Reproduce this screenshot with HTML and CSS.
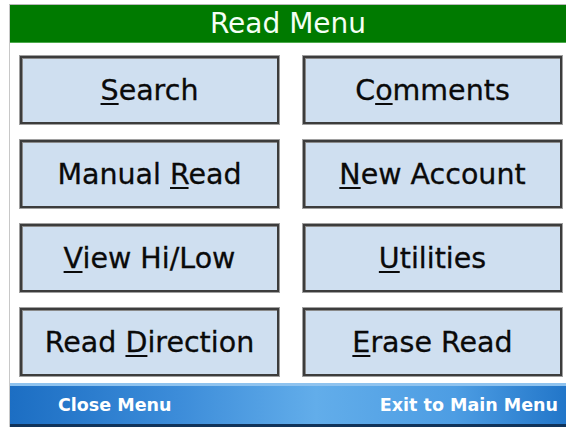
FILE: index.html
```html
<!DOCTYPE html>
<html>
<head>
  <title>Read Menu</title>
  <link rel="stylesheet" href="styles.css">
</head>
<body>
  <div class="screen">
    <div class="title-bar">Read Menu</div>
    <div class="menu-grid">
      <button class="menu-btn"><u>S</u>earch</button>
      <button class="menu-btn">C<u>o</u>mments</button>
      <button class="menu-btn">Manual <u>R</u>ead</button>
      <button class="menu-btn"><u>N</u>ew Account</button>
      <button class="menu-btn"><u>V</u>iew Hi/Low</button>
      <button class="menu-btn"><u>U</u>tilities</button>
      <button class="menu-btn">Read <u>D</u>irection</button>
      <button class="menu-btn"><u>E</u>rase Read</button>
    </div>
    <div class="soft-keys">
      <span class="soft-key">Close Menu</span>
      <span class="soft-key">Exit to Main Menu</span>
    </div>
  </div>
</body>
</html>
```

FILE: styles.css
```css
html, body {
  margin: 0;
  padding: 0;
  background-color: #fff;
}
body {
  font-family: "DejaVu Sans", Tahoma, sans-serif;
  width: 566px;
  height: 427px;
  overflow: hidden;
}
.screen {
  margin: 4px 0 0 9px;
  border-top: 1px solid #b8b8b8;
  border-left: 1px solid #c8c8c8;
  height: 422px;
  display: flex;
  flex-direction: column;
}
.title-bar {
  height: 37px;
  background-color: #007a00;
  border-bottom: 1px solid #4caa4c;
  color: #f4fff4;
  font-size: 28px;
  line-height: 37px;
  text-align: center;
}
.menu-grid {
  display: grid;
  grid-template-columns: 259px 259px;
  grid-auto-rows: 68px;
  column-gap: 24px;
  row-gap: 16px;
  padding: 13px 0 0 10px;
}
.menu-btn {
  font-family: inherit;
  font-size: 28.5px;
  color: #0a0a0a;
  background-color: #cfdff0;
  border: 2px solid #3c3c3c;
  box-shadow: inset 1px 1px 0 #8a8a8a, 0 0 0 1px #a0a0a0;
  padding: 0;
  margin: 0;
  -webkit-text-stroke: 0.3px #0a0a0a;
}
.menu-btn u {
  text-decoration-thickness: 2px;
  text-underline-offset: 3px;
}
.soft-keys {
  margin-top: 7px;
  height: 38px;
  border-top: 3px solid #8fc3ef;
  border-bottom: 3px solid #10335a;
  background: linear-gradient(to right, #1c6ec3 0%, #3c8cd9 30%, #62adea 55%, #4d9de3 80%, #2276c9 100%);
  display: flex;
  justify-content: space-between;
  align-items: center;
  padding: 0 8px 0 48px;
}
.soft-key {
  color: #fff;
  font-weight: bold;
  font-size: 17.5px;
}
```
